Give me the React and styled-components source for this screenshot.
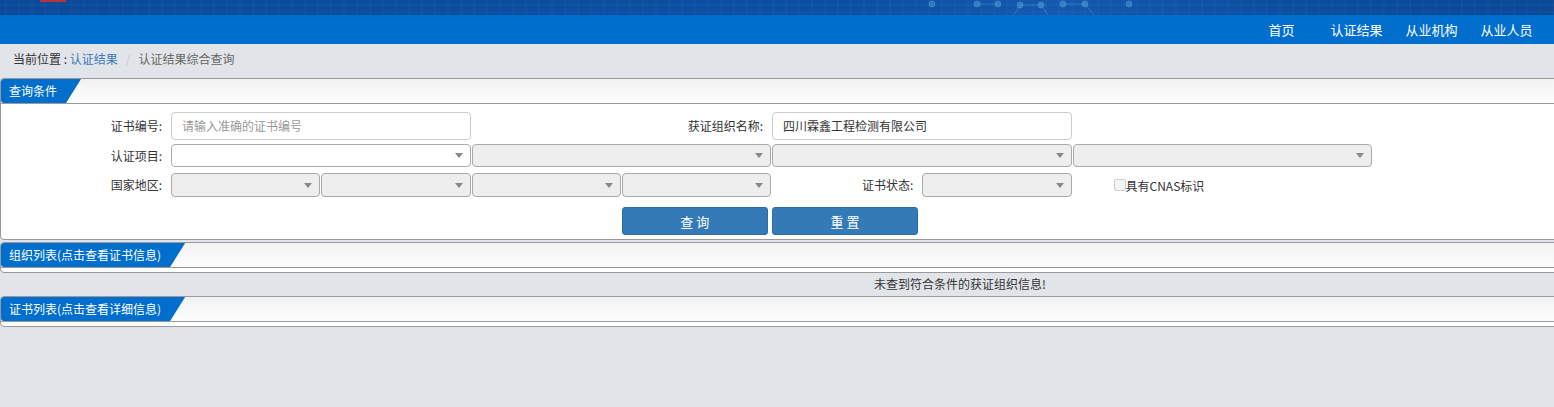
import React from 'react';
import styled, { createGlobalStyle } from 'styled-components';

const GlobalStyle = createGlobalStyle`
  html, body {
    margin: 0;
    padding: 0;
    background: #e1e5ea;
    overflow: hidden;
  }
  body {
    font-family: "Noto Sans CJK SC", "Microsoft YaHei", sans-serif;
    font-size: 12px;
    color: #333;
  }
  * { box-sizing: border-box; }
`;

const Page = styled.div`
  width: 100%;
  min-height: 407px;
  overflow: hidden;
`;

const Banner = styled.div`
  height: 15px;
  background: linear-gradient(90deg, #0b4a9a 0%, #0c4fa2 55%, #1459ae 68%, #0c4d9f 82%, #0a4898 100%);
  overflow: hidden;
  svg { display: block; }
`;

const NavBar = styled.div`
  height: 29px;
  background: #006ecd;
  display: flex;
  justify-content: flex-end;
  padding-right: 10px;
`;

const NavItem = styled.a`
  width: 75px;
  text-align: center;
  color: #fff;
  font-size: 13px;
  line-height: 29px;
  text-decoration: none;
`;

const Main = styled.div`
  width: 1920px;
`;

const Crumbs = styled.div`
  height: 34px;
  padding: 6px 0 0 13px;
  line-height: 17px;
  font-size: 12px;
  color: #333;
`;

const CrumbLink = styled.span`
  color: ${p => (p.$current ? '#666' : '#3a79bd')};
`;

const CrumbSep = styled.span`
  color: #c8c8c8;
  padding: 0 8px;
`;

const Panel = styled.div`
  border: 1px solid #9a9a9a;
  border-radius: 4px;
  background: #fff;
  margin-top: ${p => p.$top || 0}px;
`;

const PanelHead = styled.div`
  height: 25px;
  border-bottom: 1px solid #9a9a9a;
  background: linear-gradient(180deg, #f2f2f2 0%, #fdfdfd 100%);
  border-radius: 4px 4px 0 0;
  display: flex;
`;

const Tab = styled.div`
  height: 24px;
  line-height: 24px;
  padding: 0 24px 0 8px;
  background: #006ecd;
  color: #fff;
  font-size: 12px;
  border-radius: 3px 0 0 3px;
  clip-path: polygon(0 0, 100% 0, calc(100% - 15px) 100%, 0 100%);
  white-space: nowrap;
`;

const EmptyBody = styled.div`
  height: 4px;
`;

const Form = styled.div`
  padding: 8px 0 4px;
`;

const Row = styled.div`
  display: grid;
  grid-template-columns: 170px repeat(8, 150.25px);
  height: ${p => p.$h}px;
  margin-top: ${p => p.$mt || 0}px;
`;

const Label = styled.div`
  grid-column: ${p => p.$col || 'auto'};
  text-align: right;
  padding-right: 9px;
  line-height: ${p => p.$h}px;
  font-size: 12px;
  color: #333;
  white-space: nowrap;
`;

const TextInput = styled.div`
  grid-column: ${p => p.$col};
  width: calc(100% - 1px);
  height: 100%;
  border: 1px solid #ccc;
  border-radius: 4px;
  padding-left: 10px;
  line-height: 26px;
  font-size: 12px;
  color: ${p => (p.$placeholder ? '#999' : '#333')};
  background: #fff;
`;

const Select = styled.div`
  grid-column: ${p => p.$col};
  width: calc(100% - 1px);
  height: 100%;
  border: 1px solid #aaa;
  border-radius: 4px;
  background: ${p => (p.$enabled ? '#fff' : '#eee')};
  display: flex;
  align-items: center;
  justify-content: flex-end;
  padding-right: 7px;
`;

const Arrow = styled.span`
  width: 0;
  height: 0;
  border-left: 4px solid transparent;
  border-right: 4px solid transparent;
  border-top: 5px solid #888;
`;

const CheckWrap = styled.label`
  grid-column: ${p => p.$col};
  display: flex;
  align-items: center;
  padding-left: 41px;
  font-size: 12px;
  color: #333;
  white-space: nowrap;
`;

const CheckBox = styled.span`
  width: 12px;
  height: 12px;
  border: 1px solid #cfcfcf;
  border-radius: 2px;
  background: #f4f4f4;
`;

const Button = styled.button`
  grid-column: ${p => p.$col};
  width: calc(100% - 4px);
  height: 100%;
  border: 1px solid #2e6da4;
  border-radius: 3px;
  background: #337ab7;
  color: #fff;
  font-family: inherit;
  font-size: 13px;
  letter-spacing: 3px;
  padding: 0 0 0 3px;
`;

const Message = styled.div`
  height: 23px;
  padding-top: 2px;
  line-height: 17px;
  text-align: center;
  font-size: 12px;
  color: #333;
`;

const Circuit = () => (
  <svg width="1554" height="15" viewBox="0 0 1554 15">
    <g stroke="rgba(255,255,255,0.05)" strokeWidth="1">
      {Array.from({ length: 120 }).map((_, i) => (
        <line key={i} x1={i * 13 + 6} y1="0" x2={i * 13 + 6} y2="15" />
      ))}
      <line x1="0" y1="5" x2="1554" y2="5" />
      <line x1="0" y1="12" x2="1554" y2="12" />
    </g>
    <g stroke="rgba(110,170,235,0.35)" strokeWidth="1" fill="rgba(120,180,240,0.35)">
      <line x1="977" y1="4" x2="998" y2="4" />
      <circle cx="977" cy="4" r="3" />
      <circle cx="998" cy="4" r="3" />
      <line x1="1020" y1="5" x2="1041" y2="5" />
      <circle cx="1020" cy="5" r="3" />
      <circle cx="1041" cy="5" r="3" />
      <line x1="1063" y1="4" x2="1085" y2="4" />
      <circle cx="1063" cy="4" r="3" />
      <circle cx="1085" cy="4" r="3" />
      <circle cx="1129" cy="4" r="3" />
      <circle cx="932" cy="4" r="3" />
      <line x1="1041" y1="5" x2="1048" y2="15" />
      <line x1="1020" y1="5" x2="1014" y2="15" />
      <line x1="1085" y1="4" x2="1094" y2="15" />
    </g>
    <rect x="40" y="0" width="26" height="2" fill="#b8323a" />
  </svg>
);

export default function App() {
  return (
    <Page>
      <GlobalStyle />
      <Banner>
        <Circuit />
      </Banner>
      <NavBar>
        <NavItem>首页</NavItem>
        <NavItem>认证结果</NavItem>
        <NavItem>从业机构</NavItem>
        <NavItem>从业人员</NavItem>
      </NavBar>
      <Main>
        <Crumbs>
          当前位置 : <CrumbLink>认证结果</CrumbLink>
          <CrumbSep>/</CrumbSep>
          <CrumbLink $current>认证结果综合查询</CrumbLink>
        </Crumbs>

        <Panel>
          <PanelHead>
            <Tab>查询条件</Tab>
          </PanelHead>
          <Form>
            <Row $h={28}>
              <Label $h={28}>证书编号:</Label>
              <TextInput $col="span 2" $placeholder>请输入准确的证书编号</TextInput>
              <Label $col="span 2" $h={28}>获证组织名称:</Label>
              <TextInput $col="span 2">四川霖鑫工程检测有限公司</TextInput>
            </Row>
            <Row $h={23} $mt={4}>
              <Label $h={23}>认证项目:</Label>
              <Select $col="span 2" $enabled><Arrow /></Select>
              <Select $col="span 2"><Arrow /></Select>
              <Select $col="span 2"><Arrow /></Select>
              <Select $col="span 2"><Arrow /></Select>
            </Row>
            <Row $h={24} $mt={6}>
              <Label $h={24}>国家地区:</Label>
              <Select $col="span 1"><Arrow /></Select>
              <Select $col="span 1"><Arrow /></Select>
              <Select $col="span 1"><Arrow /></Select>
              <Select $col="span 1"><Arrow /></Select>
              <Label $h={24}>证书状态:</Label>
              <Select $col="span 1"><Arrow /></Select>
              <CheckWrap $col="span 2">
                <CheckBox />
                具有CNAS标识
              </CheckWrap>
            </Row>
            <Row $h={28} $mt={10}>
              <Button $col="5 / span 1">查询</Button>
              <Button $col="6 / span 1">重置</Button>
            </Row>
          </Form>
        </Panel>

        <Panel $top={2}>
          <PanelHead>
            <Tab>组织列表(点击查看证书信息)</Tab>
          </PanelHead>
          <EmptyBody />
        </Panel>
        <Message>未查到符合条件的获证组织信息!</Message>

        <Panel>
          <PanelHead>
            <Tab>证书列表(点击查看详细信息)</Tab>
          </PanelHead>
          <EmptyBody />
        </Panel>
      </Main>
    </Page>
  );
}
